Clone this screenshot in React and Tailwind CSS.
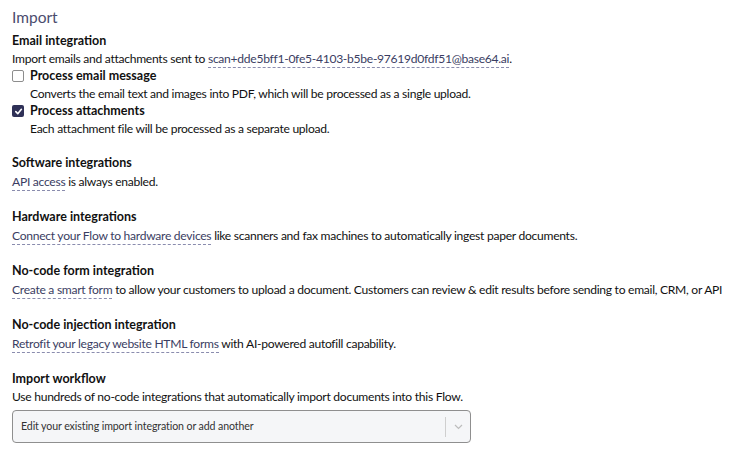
import React from "react";

const font = { fontFamily: "Lato, 'Noto Sans', sans-serif" };

function Link({ children }) {
  return (
    <a className="text-[#3a3d62] border-b border-dashed border-[#8a8cae] pb-[1px] cursor-pointer">
      {children}
    </a>
  );
}

function Section({ title, children }) {
  return (
    <div className="flex flex-col">
      <div className="font-bold text-[12.5px] tracking-normal leading-[18px] text-[#111]">{title}</div>
      <div className="leading-[19px] text-[#111]">{children}</div>
    </div>
  );
}

function Check({ checked, label, desc }) {
  return (
    <div className="flex flex-col">
      <label className="flex items-center gap-[6px] leading-[18px]">
        {checked ? (
          <span className="w-[12px] h-[12px] rounded-[2px] bg-[#2f3157] flex items-center justify-center">
            <svg width="9" height="9" viewBox="0 0 10 10">
              <path d="M2 5.2 L4.2 7.4 L8.2 2.6" stroke="#fff" strokeWidth="1.8" fill="none" strokeLinecap="round" strokeLinejoin="round" />
            </svg>
          </span>
        ) : (
          <span className="w-[12px] h-[12px] rounded-[2px] border border-[#8d8d8d] bg-white" />
        )}
        <span className="font-bold text-[12.5px] tracking-normal text-[#111]">{label}</span>
      </label>
      <div className="pl-[18px] leading-[17px] text-[#111]">{desc}</div>
    </div>
  );
}

export default function App() {
  return (
    <div className="w-[755px] h-[458px] bg-white px-[12px] pt-[6px]" style={font}>
      <div className="text-[15.5px] leading-[22px] text-[#4b4c6e]">Import</div>
      <div className="flex flex-col gap-[17px] mt-[4px] text-[12.1px] tracking-[-0.28px]">
        <div className="flex flex-col">
          <div className="font-bold text-[12.5px] tracking-normal leading-[18px] text-[#111]">Email integration</div>
          <div className="leading-[17px] text-[#111]">
            Import emails and attachments sent to{" "}
            <Link>scan+dde5bff1-0fe5-4103-b5be-97619d0fdf51@base64.ai</Link>.
          </div>
          <Check
            label="Process email message"
            desc="Converts the email text and images into PDF, which will be processed as a single upload."
          />
          <Check
            checked
            label="Process attachments"
            desc="Each attachment file will be processed as a separate upload."
          />
        </div>
        <Section title="Software integrations">
          <Link>API access</Link> is always enabled.
        </Section>
        <Section title="Hardware integrations">
          <Link>Connect your Flow to hardware devices</Link> like scanners and fax machines to automatically ingest paper documents.
        </Section>
        <Section title="No-code form integration">
          <span className="whitespace-nowrap">
            <Link>Create a smart form</Link> to allow your customers to upload a document. Customers can review &amp; edit results before sending to email, CRM, or API
          </span>
        </Section>
        <Section title="No-code injection integration">
          <Link>Retrofit your legacy website HTML forms</Link> with AI-powered autofill capability.
        </Section>
        <div className="flex flex-col">
          <div className="font-bold text-[12.5px] tracking-normal leading-[18px] text-[#111]">Import workflow</div>
          <div className="leading-[18px] text-[#111]">
            Use hundreds of no-code integrations that automatically import documents into this Flow.
          </div>
          <div className="mt-[4px] w-[459px] h-[33px] rounded-[4px] border border-[#8f8f8f] bg-[#f5f6f8] flex items-center">
            <div className="flex-1 pl-[8px] text-[10.6px] tracking-[-0.1px] text-[#333]">Edit your existing import integration or add another</div>
            <div className="w-px h-[20px] bg-[#cfcfcf]" />
            <div className="w-[24px] flex items-center justify-center">
              <svg width="9" height="6" viewBox="0 0 9 6">
                <path d="M1 1 L4.5 4.5 L8 1" stroke="#bdbdbd" strokeWidth="1.2" fill="none" />
              </svg>
            </div>
          </div>
        </div>
      </div>
    </div>
  );
}
